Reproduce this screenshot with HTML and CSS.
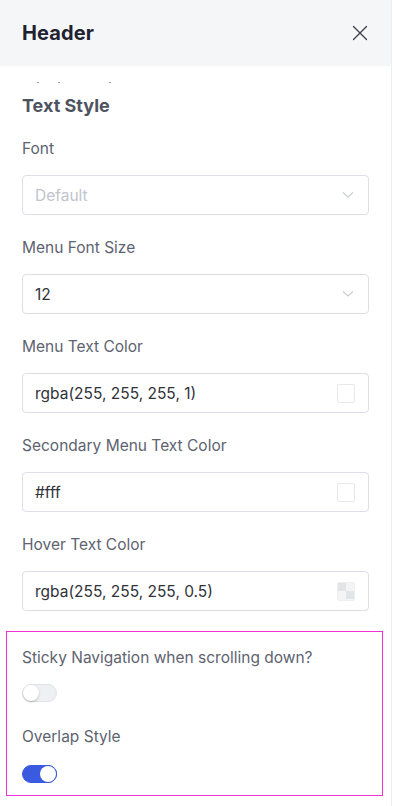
FILE: index.html
```html
<!DOCTYPE html>
<html>
<head>
<meta charset="utf-8">
<link rel="stylesheet" href="styles.css">
</head>
<body>
<div class="panel">
  <div class="panel-head">
    <h1 class="panel-title">Header</h1>
    <button class="close" aria-label="Close">
      <svg width="16" height="16" viewBox="0 0 16 16"><path d="M1.5 1.5 L14.5 14.5 M14.5 1.5 L1.5 14.5" stroke="#3a3d45" stroke-width="1.3" fill="none" stroke-linecap="round"/></svg>
    </button>
  </div>
  <div class="panel-body">
    <div class="clip-prev" aria-hidden="true">
      <span class="frag f1"></span><span class="frag f2"></span><span class="frag f3"></span>
    </div>
    <h2 class="section-title">Text Style</h2>

    <div class="fields">
      <div class="field">
        <label class="field-label">Font</label>
        <div class="control">
          <span class="placeholder">Default</span>
          <svg class="chev" width="12" height="8" viewBox="0 0 12 8"><path d="M1 1.5 L6 6 L11 1.5" stroke="#c8ccd3" stroke-width="1.2" fill="none"/></svg>
        </div>
      </div>

      <div class="field">
        <label class="field-label">Menu Font Size</label>
        <div class="control">
          <span class="value">12</span>
          <svg class="chev" width="12" height="8" viewBox="0 0 12 8"><path d="M1 1.5 L6 6 L11 1.5" stroke="#c8ccd3" stroke-width="1.2" fill="none"/></svg>
        </div>
      </div>

      <div class="field">
        <label class="field-label">Menu Text Color</label>
        <div class="control">
          <span class="value">rgba(255, 255, 255, 1)</span>
          <span class="swatch"></span>
        </div>
      </div>

      <div class="field">
        <label class="field-label">Secondary Menu Text Color</label>
        <div class="control">
          <span class="value">#fff</span>
          <span class="swatch"></span>
        </div>
      </div>

      <div class="field">
        <label class="field-label">Hover Text Color</label>
        <div class="control">
          <span class="value">rgba(255, 255, 255, 0.5)</span>
          <span class="swatch swatch-alpha"></span>
        </div>
      </div>
    </div>

    <div class="highlight">
      <div class="toggle-field">
        <label class="field-label">Sticky Navigation when scrolling down?</label>
        <span class="toggle"><span class="knob"></span></span>
      </div>
      <div class="toggle-field">
        <label class="field-label">Overlap Style</label>
        <span class="toggle on"><span class="knob"></span></span>
      </div>
    </div>
  </div>
</div>
</body>
</html>
```
FILE: styles.css
```css
* { box-sizing: border-box; }
html, body { margin: 0; padding: 0; background: #fff; }
body {
  font-family: Inter, "Liberation Sans", Arial, sans-serif;
  color: #333;
}
.panel {
  width: 392px;
  height: 806px;
  border-right: 1px solid #eceef1;
  overflow: hidden;
  background: #fff;
}
.panel-head {
  height: 66px;
  background: #f5f6f8;
  display: flex;
  align-items: center;
  justify-content: space-between;
  padding: 0 22px 0 22px;
}
.panel-title {
  margin: 0;
  font-size: 20px;
  font-weight: 700;
  color: #1e2230;
  letter-spacing: 0.1px;
}
.close {
  border: 0;
  background: none;
  padding: 0;
  width: 16px;
  height: 16px;
  display: flex;
  margin-right: 1px;
  margin-top: -1px;
}
.panel-body {
  padding: 0 22px;
}
.clip-prev {
  height: 20px;
  padding-top: 16px;
  display: flex;
}
.frag {
  display: block;
  height: 1px;
  width: 2px;
  background: #9a9ea8;
}
.f1 { margin-left: 15px; }
.f2 { margin-left: 19px; }
.f3 { margin-left: 49px; }
.section-title {
  margin: 10px 0 0;
  font-size: 18px;
  font-weight: 700;
  line-height: 20px;
  color: #4e5361;
}
.fields {
  margin-top: 23px;
  display: flex;
  flex-direction: column;
  gap: 23px;
}
.field-label {
  display: block;
  font-size: 15.5px;
  line-height: 20px;
  color: #5e6370;
}
.control {
  margin-top: 16px;
  height: 40px;
  border: 1px solid #dcdfe5;
  border-radius: 4px;
  display: flex;
  align-items: center;
  justify-content: space-between;
  padding: 0 12px 0 12px;
  font-size: 15.5px;
}
.placeholder { color: #c0c4cc; }
.value { color: #2f3238; }
.chev { margin-right: 2px; }
.swatch {
  width: 18px;
  height: 19px;
  border: 1px solid #e7e8eb;
  border-radius: 2px;
  margin-right: 1px;
}
.swatch-alpha {
  border-color: #eeeff1;
  background:
    linear-gradient(#e3e4e6, #e3e4e6) 0 0 / 8px 8px no-repeat,
    linear-gradient(#e3e4e6, #e3e4e6) 8px 8px / 8px 8px no-repeat,
    #f4f4f5;
}
.highlight {
  margin: 20px -14px 0 -16px;
  border: 1px solid #f032d2;
  padding: 16px 13px 12px 15px;
}
.toggle-field + .toggle-field { margin-top: 25px; }
.toggle {
  display: block;
  margin-top: 16px;
  width: 35px;
  height: 18px;
  border-radius: 9px;
  background: #eef0f3;
  border: 1px solid #e1e3e8;
  position: relative;
}
.toggle-field + .toggle-field .toggle { margin-top: 18px; }
.toggle .knob {
  position: absolute;
  top: 0;
  left: 0;
  width: 16px;
  height: 16px;
  border-radius: 50%;
  background: #fff;
  box-shadow: 0 1px 2px rgba(0,0,0,0.25);
}
.toggle.on {
  background: #3a5be0;
  border-color: #3a5be0;
}
.toggle.on .knob {
  left: auto;
  right: 0;
  box-shadow: 0 0 0 1px #3a5be0;
}
```
